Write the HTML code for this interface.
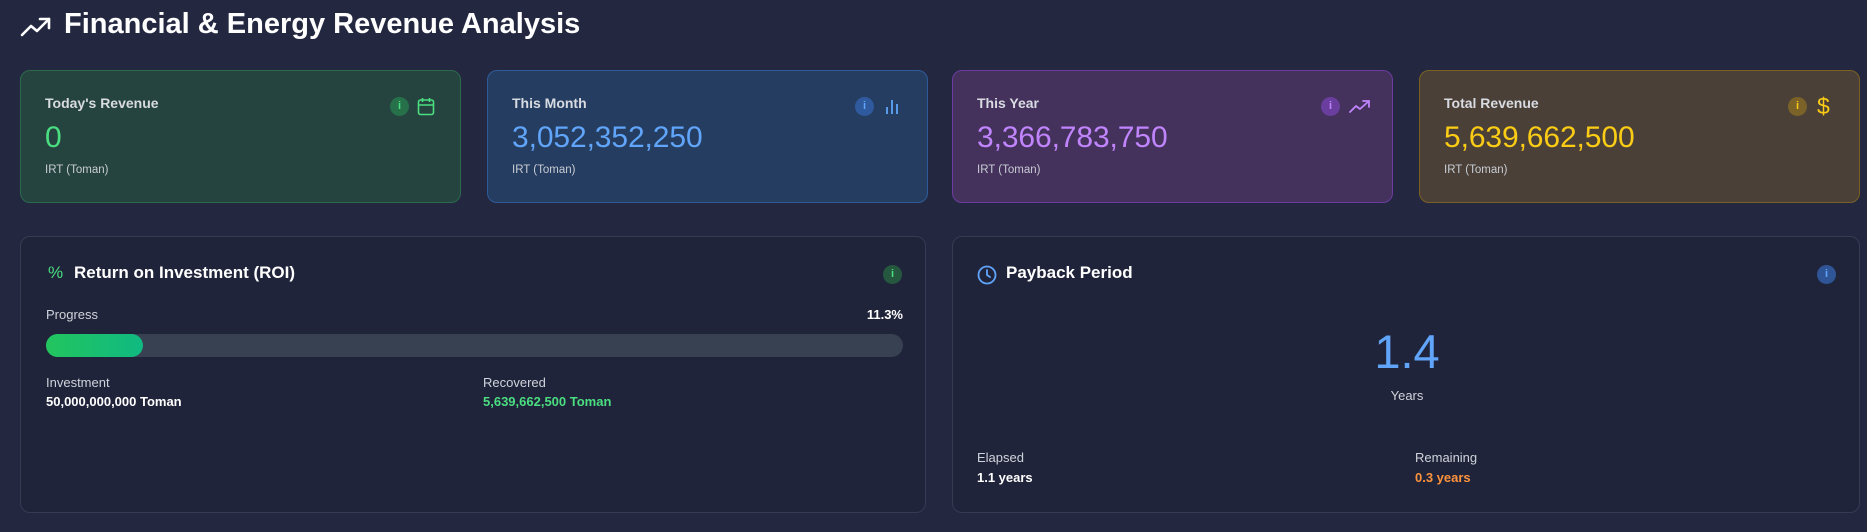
<!DOCTYPE html>
<html><head><meta charset="utf-8"><style>
*{box-sizing:border-box;margin:0;padding:0}
body{width:1867px;height:532px;background:#232840;font-family:"Liberation Sans",sans-serif;color:#fff;position:relative;overflow:hidden}
.abs{position:absolute}
.title{left:64px;top:8px;font-size:29px;font-weight:600;letter-spacing:0px}
.card{position:absolute;top:70px;width:441px;height:133px;border-radius:10px;border:1px solid}
.lbl{position:absolute;left:24px;top:24px;font-size:14px;font-weight:700;color:#d8dbe2}
.val{position:absolute;left:24px;top:50px;font-size:30px;letter-spacing:-0.1px}
.unit{position:absolute;left:24px;top:93px;font-size:11.5px;color:#c8ccd4}
.info{position:absolute;width:19px;height:19px;border-radius:50%;font-size:11px;font-weight:700;text-align:center;line-height:19px}
.panel{position:absolute;top:236px;height:277px;border-radius:10px;border:1px solid #353b52;background:#20243a}
.ph{position:absolute;top:26px;font-size:17px;font-weight:700}
.sm{font-size:13px;color:#d0d3da}
.b{font-size:13px;font-weight:700}
</style></head><body>
<svg class="abs" style="left:20px;top:16px" width="32" height="22" viewBox="0 0 32 22" fill="none" stroke="#fff" stroke-width="2.6" stroke-linecap="round" stroke-linejoin="round"><path d="M2 19 L11 10 L17 15 L29 3"/><path d="M20 3 H29 V12"/></svg>
<div class="abs title">Financial &amp; Energy Revenue Analysis</div>

<div class="card" style="left:20px;background:#25443f;border-color:#2b6a4c">
<div class="lbl">Today's Revenue</div>
<div class="val" style="color:#4ade80">0</div>
<div class="unit">IRT (Toman)</div>
<div class="info" style="left:369px;top:26px;background:#26704a;color:#4ade80">i</div>
<svg class="abs" style="left:396px;top:26px" width="18" height="19" viewBox="0 0 18 19" fill="none" stroke="#4ade80" stroke-width="1.6"><rect x="1.5" y="3" width="15" height="14.5" rx="2"/><path d="M1.5 8 H16.5 M5.5 1 V5 M12.5 1 V5"/></svg>
</div>

<div class="card" style="left:487px;background:#253d60;border-color:#2f5b98">
<div class="lbl">This Month</div>
<div class="val" style="color:#60a5fa">3,052,352,250</div>
<div class="unit">IRT (Toman)</div>
<div class="info" style="left:367px;top:26px;background:#2f5a9e;color:#60a5fa">i</div>
<svg class="abs" style="left:396px;top:27px" width="16" height="17" viewBox="0 0 16 17" fill="none" stroke="#60a5fa" stroke-width="1.8"><path d="M3 16 V9 M8 16 V2 M13 16 V6"/></svg>
</div>

<div class="card" style="left:952px;background:#44315c;border-color:#6c3ca0">
<div class="lbl">This Year</div>
<div class="val" style="color:#c084fc">3,366,783,750</div>
<div class="unit">IRT (Toman)</div>
<div class="info" style="left:368px;top:26px;background:#6a3e9e;color:#c084fc">i</div>
<svg class="abs" style="left:396px;top:28px" width="22" height="15" viewBox="0 0 22 15" fill="none" stroke="#c084fc" stroke-width="1.8" stroke-linecap="round" stroke-linejoin="round"><path d="M1 13 L7 7 L11 10 L20 2"/><path d="M14 2 H20 V8"/></svg>
</div>

<div class="card" style="left:1419px;background:#4a4037;border-color:#7a6024">
<div class="lbl">Total Revenue</div>
<div class="val" style="color:#facc15">5,639,662,500</div>
<div class="unit">IRT (Toman)</div>
<div class="info" style="left:368px;top:26px;background:#7a6228;color:#facc15">i</div>
<div class="abs" style="left:397px;top:22px;font-size:23px;color:#facc15">$</div>
</div>

<div class="panel" style="left:20px;width:906px">
<div class="ph" style="left:27px;color:#4ade80;font-weight:400">%</div>
<div class="ph" style="left:53px">Return on Investment (ROI)</div>
<div class="info" style="left:862px;top:28px;background:#25583f;color:#4ade80">i</div>
<div class="abs sm" style="left:25px;top:70px">Progress</div>
<div class="abs b" style="right:22px;top:70px">11.3%</div>
<div class="abs" style="left:25px;top:97px;width:857px;height:23px;border-radius:12px;background:#374151"></div>
<div class="abs" style="left:25px;top:97px;width:97px;height:23px;border-radius:12px;background:linear-gradient(90deg,#22c55e,#10b981)"></div>
<div class="abs sm" style="left:25px;top:138px">Investment</div>
<div class="abs b" style="left:25px;top:157px">50,000,000,000 Toman</div>
<div class="abs sm" style="left:462px;top:138px">Recovered</div>
<div class="abs b" style="left:462px;top:157px;color:#4ade80">5,639,662,500 Toman</div>
</div>

<div class="panel" style="left:952px;width:908px">
<svg class="abs" style="left:24px;top:28px" width="20" height="20" viewBox="0 0 20 20" fill="none" stroke="#60a5fa" stroke-width="1.8" stroke-linecap="round"><circle cx="10" cy="10" r="8.5"/><path d="M10 5 V10 L13 12"/></svg>
<div class="ph" style="left:53px">Payback Period</div>
<div class="info" style="left:864px;top:28px;background:#2f5596;color:#60a5fa">i</div>
<div class="abs" style="left:0;width:908px;text-align:center;top:87px;font-size:47px;color:#60a5fa">1.4</div>
<div class="abs sm" style="left:0;width:908px;text-align:center;top:151px">Years</div>
<div class="abs sm" style="left:24px;top:213px">Elapsed</div>
<div class="abs b" style="left:24px;top:233px">1.1 years</div>
<div class="abs sm" style="left:462px;top:213px">Remaining</div>
<div class="abs b" style="left:462px;top:233px;color:#fb923c">0.3 years</div>
</div>
</body></html>
